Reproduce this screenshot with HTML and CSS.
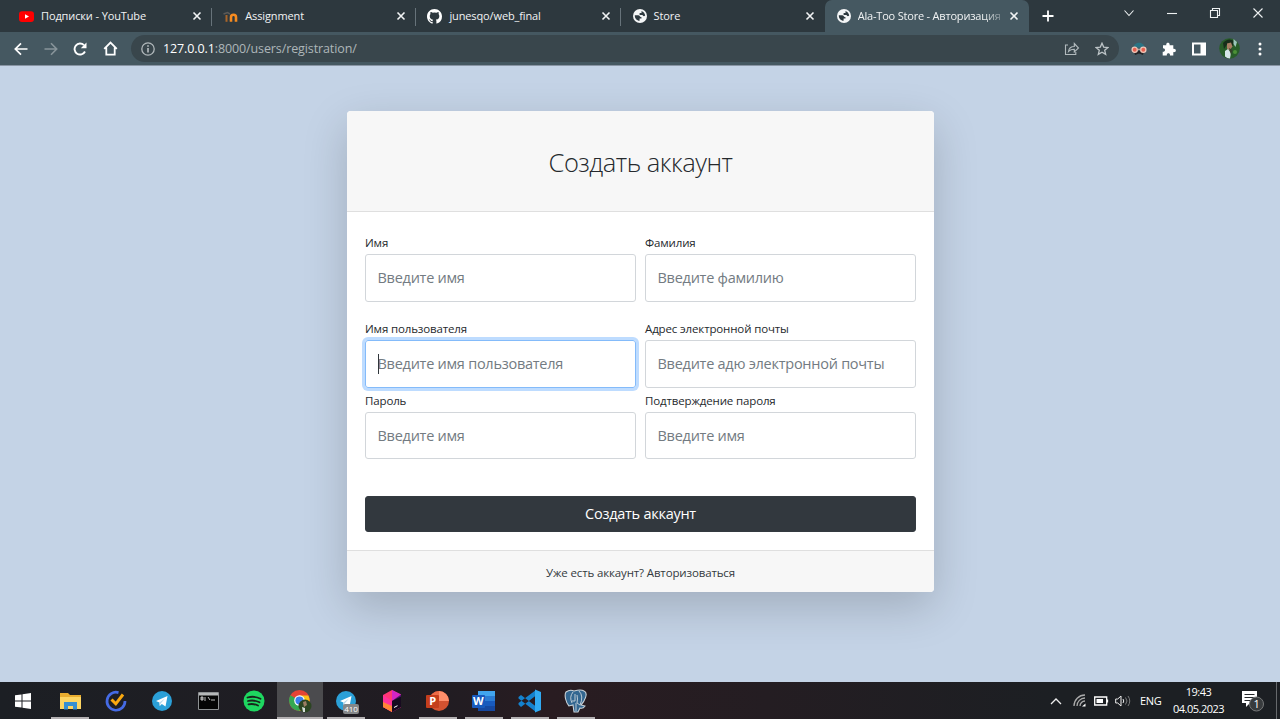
FILE: index.html
```html
<!DOCTYPE html>
<html lang="ru">
<head>
<meta charset="utf-8">
<title>Ala-Too Store - Авторизация</title>
<link rel="stylesheet" href="styles.css">
</head>
<body>
<svg class="defs" width="0" height="0">
  <symbol id="x" viewBox="0 0 10 10"><path d="M1.5 1.5l7 7M8.5 1.5l-7 7" stroke="#f1f3f4" stroke-width="1.6"/></symbol>
  <symbol id="globe" viewBox="0 0 14 14"><circle cx="7" cy="7" r="7" fill="#f4f6f7"/><path d="M1.800 6.200h3.400c1.700 0 1.600 2 3.300 2v1.300H6.600v2.300C3.800 11.600 1.600 9.300 1.800 6.200zM8.500 1.900c2.100.7 3.500 2.500 3.700 4.700-1 1-2.400.7-2.700-.5H6.600V3.900h1.900z" fill="#2e3a40"/></symbol>
  <symbol id="plane" viewBox="0 0 20 20"><circle cx="10" cy="10" r="10" fill="#2ba0d8"/><path d="M4 10l11.500-5-2 10.500-3.700-2.600-2 2-.4-3.500z" fill="#fff"/><path d="M7.400 11.400l5.600-4-4.300 5-.9 2.500z" fill="#b8d9eb"/></symbol>
</svg>
<div class="screen">
  <header class="tabs">
    <div class="tab sep">
      <svg class="fav" viewBox="0 0 15 15"><rect y="2.200" width="15" height="10.800" rx="3" fill="#f00"/><path d="M6 5.200v4.600l4-2.300z" fill="#fff"/></svg>
      <span class="title">Подписки - YouTube</span><svg class="close"><use href="#x"/></svg>
    </div>
    <div class="tab sep">
      <svg class="fav" viewBox="0 0 15 15"><path d="M.5 5l4-1.500 2.500 1.500" fill="none" stroke="#5b5a58" stroke-width="1.500"/><path d="M3.500 6v6.800" stroke="#a8652a" stroke-width="2"/><path d="M8 12.800V8.200c0-3.200 5-3.200 5 0v4.600" fill="none" stroke="#f58b20" stroke-width="2.600"/></svg>
      <span class="title">Assignment</span><svg class="close"><use href="#x"/></svg>
    </div>
    <div class="tab sep">
      <svg class="fav" viewBox="0 0 16 16"><path fill="#fff" d="M8 0C3.580 0 0 3.580 0 8c0 3.540 2.290 6.530 5.470 7.590.4.070.55-.17.55-.38v-1.490c-2.010.37-2.530-.49-2.690-.94-.09-.23-.48-.94-.82-1.130-.28-.15-.68-.52-.01-.53.63-.01 1.080.58 1.230.82.72 1.210 1.870.87 2.330.66.07-.52.28-.87.51-1.070-1.780-.2-3.640-.89-3.640-3.950 0-.87.31-1.590.82-2.150-.08-.2-.36-1.020.08-2.120 0 0 .67-.21 2.200.82a7.500 7.500 0 0 1 4 0c1.530-1.040 2.200-.82 2.200-.82.44 1.100.16 1.920.08 2.120.51.56.82 1.270.82 2.150 0 3.070-1.870 3.750-3.650 3.950.29.25.54.73.54 1.480v2.190c0 .21.150.46.550.38A8 8 0 0 0 16 8c0-4.420-3.580-8-8-8z"/></svg>
      <span class="title">junesqo/web_final</span><svg class="close"><use href="#x"/></svg>
    </div>
    <div class="tab">
      <svg class="fav globe"><use href="#globe"/></svg>
      <span class="title">Store</span><svg class="close"><use href="#x"/></svg>
    </div>
    <div class="tab active">
      <svg class="fav globe"><use href="#globe"/></svg>
      <span class="title">Ala-Too Store - Авторизация</span><svg class="close"><use href="#x"/></svg>
    </div>
    <svg class="plus" viewBox="0 0 12 12"><path d="M6 .5v11M.5 6h11" stroke="#fff" stroke-width="1.800"/></svg>
    <div class="window-controls">
      <svg width="12" height="12" viewBox="0 0 12 12"><path d="M1.500 3.500L6 8.500l4.500-5"/></svg>
      <svg width="12" height="12" viewBox="0 0 12 12"><path d="M1 6.500h10"/></svg>
      <svg width="12" height="12" viewBox="0 0 12 12"><path d="M1.500 3.500h7v7h-7zM3.500 3.500v-2h7v7h-2"/></svg>
      <svg width="12" height="12" viewBox="0 0 12 12"><path d="M1.500 1.500l9 9M10.500 1.500l-9 9"/></svg>
    </div>
  </header>

  <nav class="toolbar">
    <div class="nav-icons">
      <svg width="14" height="14" viewBox="0 0 14 14"><path d="M13.500 7H1.500M7 1.300L1.300 7 7 12.700" fill="none" stroke="#fff" stroke-width="1.700"/></svg>
      <svg width="14" height="14" viewBox="0 0 14 14"><path d="M.5 7h12M7 1.300L12.700 7 7 12.700" fill="none" stroke="#88949a" stroke-width="1.600"/></svg>
      <svg width="14" height="14" viewBox="0 0 14 14"><path d="M12 9.500A5.500 5.500 0 1 1 11 3.200" fill="none" stroke="#fff" stroke-width="1.900"/><path d="M13.500.5v5.700H7.800z" fill="#fff"/></svg>
      <svg width="15" height="15" viewBox="0 0 15 15"><path d="M1.200 7.800l6.300-6.300 6.300 6.300M3.300 6.500v7.200h8.400V6.500" fill="none" stroke="#fff" stroke-width="1.800"/></svg>
    </div>
    <div class="address">
      <svg width="14" height="14" viewBox="0 0 14 14"><circle cx="7" cy="7" r="6.200" fill="none" stroke="#b1b8bb" stroke-width="1.300"/><path d="M7 6v4.500M7 3.300v1.500" stroke="#c2c8ca" stroke-width="1.500"/></svg>
      <span class="url"><b>127.0.0.1</b>:8000/users/registration/</span>
      <svg class="share" width="16" height="14" viewBox="0 0 16 14"><path d="M4 3H1.500v9.500h10.300V10M4.500 9.500c.5-3.500 2.500-5 5.800-5V1.500L14.500 6l-4.200 4V7.200c-2.500 0-4.300.6-5.800 2.300z" fill="none" stroke="#b2babd" stroke-width="1.100"/></svg>
      <svg width="14" height="14" viewBox="0 0 14 14"><path d="M7 1.200l1.700 3.900 4.200.4-3.200 2.800 1 4.100L7 10.200l-3.700 2.200 1-4.100L1.100 5.500l4.200-.4z" fill="none" stroke="#bdc4c7" stroke-width="1.300"/></svg>
    </div>
    <svg class="ext" width="16" height="14" viewBox="0 0 16 14"><path d="M2.500 5.500C3-.8 13-.8 13.500 5.500z" fill="#2a7484"/><path d="M3 9h10l-1 4-4-1.500L4 13z" fill="#242326"/><circle cx="3.700" cy="7.800" r="2.600" fill="#e8604f" stroke="#efc7b8" stroke-width="1.300"/><circle cx="12.300" cy="7.800" r="2.600" fill="#e8604f" stroke="#efc7b8" stroke-width="1.300"/><path d="M6 7.300h4" stroke="#d8b5a8"/></svg>
    <svg class="puzzle" width="14" height="14" viewBox="0 0 14 14"><path d="M1 3.200h3.300C3.600-.1 8.200-.1 7.600 3.200h3.700v3.500c3.400-.6 3.400 4 0 3.400v3.400H8c.3-3-3.500-3-3.200 0H.7v-3.700c3 .2 3-3.700.3-3.500z" fill="#fff"/></svg>
    <svg class="panel" width="14" height="14" viewBox="0 0 14 14"><path d="M0 .5h14v13H0zM2 2.500v9h6.500v-9z" fill="#fff" fill-rule="evenodd"/></svg>
    <svg class="avatar" width="21" height="21" viewBox="0 0 21 21"><circle cx="10.500" cy="10.500" r="10.300" fill="#285d29"/><path d="M4 5q5-6 11-2l-1 5-5-3-4 6z" fill="#172d1b"/><path d="M14.500 1l3.500 3-1.500 5-2-3z" fill="#9cc6bc"/><path d="M8 5.500l4-1 1.500 4-3 4-2.500-2z" fill="#a87d63"/><path d="M6 13l3-2 3 4-1 5.500q-3 0-5-2z" fill="#d6e6e8"/><path d="M10 10l3.500 2-1.500 5z" fill="#37402a"/><circle cx="16" cy="14" r="2" fill="#4c9137"/></svg>
    <svg width="4" height="14" viewBox="0 0 4 14" fill="#fff"><circle cx="2" cy="2" r="1.500"/><circle cx="2" cy="7" r="1.500"/><circle cx="2" cy="12" r="1.500"/></svg>
  </nav>

  <main class="page">
    <form class="card">
      <div class="card-head"><h1>Создать аккаунт</h1></div>
      <div class="card-body">
        <div class="row first">
          <div class="group"><label>Имя</label><div class="input"><span>Введите имя</span></div></div>
          <div class="group"><label>Фамилия</label><div class="input"><span>Введите фамилию</span></div></div>
        </div>
        <div class="row">
          <div class="group"><label>Имя пользователя</label><div class="input focus"><i class="caret"></i><span>Введите имя пользователя</span></div></div>
          <div class="group"><label>Адрес электронной почты</label><div class="input"><span>Введите адю электронной почты</span></div></div>
        </div>
        <div class="row">
          <div class="group"><label>Пароль</label><div class="input"><span>Введите имя</span></div></div>
          <div class="group"><label>Подтверждение пароля</label><div class="input"><span>Введите имя</span></div></div>
        </div>
        <button type="button" class="submit">Создать аккаунт</button>
      </div>
      <div class="card-foot"><span>Уже есть аккаунт? Авторизоваться</span></div>
    </form>
  </main>

  <footer class="taskbar">
    <div class="apps">
      <div class="app start"><svg width="16" height="16" viewBox="0 0 16 16" fill="#fff"><path d="M0 2.300l6.500-.9v6.100H0zM7.500 1.200L16 0v7.500H7.500zM0 8.500h6.500v6.100L0 13.700zM7.500 8.500H16V16l-8.500-1.200z"/></svg></div>
      <div class="app open"><svg width="21" height="18" viewBox="0 0 21 18"><path d="M0 1h8l2 2h11v14H0z" fill="#e9ad2f"/><path d="M0 5h21v12H0z" fill="#fdd562"/><path d="M4 17.500V10h13v7.500h-4V14H8v3.500z" fill="#368fd2"/></svg></div>
      <div class="app"><svg width="22" height="22" viewBox="0 0 22 22"><path d="M13.500 2.600A9 9 0 1 0 20 11" fill="none" stroke="#456be5" stroke-width="2.700"/><path d="M6.500 9.500l4.300 4.300L18 4.500" fill="none" stroke="#f9a80f" stroke-width="3"/></svg></div>
      <div class="app"><svg width="20" height="20"><use href="#plane"/></svg></div>
      <div class="app"><svg width="21" height="18" viewBox="0 0 21 18"><path d="M.5.500h20v17H.5z" fill="#050505" stroke="#8e9193"/><path d="M1 1h19v2.500H1z" fill="#b6b8b9"/><path d="M3 5h2v3H3zM7 5v4M10 5l2 3M13 8h4" fill="#888" stroke="#bbb"/></svg></div>
      <div class="app"><svg width="22" height="22" viewBox="0 0 22 22"><circle cx="11" cy="11" r="10.500" fill="#1ed760"/><path d="M4.500 7.500q7-2 13 1.300M5 11q6-1.500 11.500 1.300M5.500 14.300q5-1 9.500 1.200" fill="none" stroke="#18251c" stroke-width="1.800" stroke-linecap="round"/></svg></div>
      <div class="app open current"><svg width="24" height="24" viewBox="0 0 24 24"><circle cx="11.500" cy="11.500" r="10.500" fill="#e54335"/><path d="M2.400 6.300A10.500 10.500 0 0 0 11.500 22l4.200-8z" fill="#35a853"/><path d="M11.500 6.500h8.800A10.500 10.500 0 0 1 11.500 22l4.300-8z" fill="#fbc116"/><circle cx="11.500" cy="11.500" r="5.300" fill="#fff"/><circle cx="11.500" cy="11.500" r="4.100" fill="#3b7ded"/><circle cx="17" cy="17" r="6.500" fill="#2c4522"/><path d="M15 13l3-1 1 4-3 2z" fill="#9b7d63"/><path d="M14 18l3 1v4h-2z" fill="#d5ded9"/></svg></div>
      <div class="app open"><div class="badged"><svg width="20" height="20"><use href="#plane"/></svg><span class="count">410</span></div></div>
      <div class="app"><svg width="20" height="22" viewBox="0 0 20 22"><path d="M10 0l9 4.500v12.700L10 22l-9-5V5z" fill="#ff3674"/><path d="M10 0l9 4.500-9 6.500z" fill="#d325c5"/><path d="M1 5l9 6v11l-9-5z" fill="#ff319a"/><path d="M1 12l9 4v6l-9-5z" fill="#ff8735"/><path d="M10 11l9-6.500V17l-9 5z" fill="#4e1273"/><path d="M10 11l9-4.500V17l-9 5z" fill="#170b20"/><path d="M12 17.500l3.500-1.800" stroke="#fff"/></svg></div>
      <div class="app open"><svg width="24" height="22" viewBox="0 0 24 22"><circle cx="13" cy="11" r="10" fill="#d35230"/><path d="M13 1a10 10 0 0 1 10 10H13z" fill="#ff8f6b"/><path d="M3 11a10 10 0 0 1 10-10v10z" fill="#ed6c47"/><rect y="5" width="13" height="13" rx="1" fill="#c43e1c"/><text x="3.200" y="15.300" class="office">P</text></svg></div>
      <div class="app open"><svg width="24" height="22" viewBox="0 0 24 22"><path d="M6 1h17v5H6z" fill="#41a5ee"/><path d="M6 6h17v5H6z" fill="#2b7cd3"/><path d="M6 11h17v5H6z" fill="#185abd"/><path d="M6 16h17v5H6z" fill="#1648a0"/><rect y="5" width="13" height="13" rx="1" fill="#185abd"/><text x="1" y="15.300" class="office">W</text></svg></div>
      <div class="app open"><svg width="24" height="24" viewBox="0 0 24 24"><path d="M.5 8l2.500-2L18 17.500V23L.5 9.500zM.5 15.500L3 18 18 6.500V1L.5 14z" fill="#1482cf"/><path d="M17 .5l6 2.500v18l-6 2.500z" fill="#31aaf2"/></svg></div>
      <div class="app open"><svg width="24" height="24" viewBox="0 0 24 24"><path d="M2 3q4-3 8-1 7-2 10 0c5 2 0 11-3 14l4 1q-2 3-5 2l-2 4h-4l-1-7-4 1C2 14 0 6 2 3z" fill="#336791" stroke="#c9d2d8" stroke-width="1.100"/><path d="M9 3q-4 5-1 11M8 12h3V5M15 2q5 5 1 14l-3-2q1-4 0-8M12 14v8" fill="none" stroke="#bccad4" stroke-width="1"/></svg></div>
    </div>
    <div class="tray">
      <svg class="chevron" width="12" height="12" viewBox="0 0 12 12"><path d="M1 9l5-5 5 5" fill="none" stroke="#eee" stroke-width="1.300"/></svg>
      <svg class="wifi" width="13" height="13" viewBox="0 0 13 13"><path d="M1 12A11 11 0 0 1 12 1M4 12A8 8 0 0 1 12 4M7 12a5 5 0 0 1 5-5" fill="none" stroke="#aaa" stroke-width="1.300"/><path d="M9 12.500l3.500-3v3z" fill="#fff"/></svg>
      <svg class="battery" width="15" height="10" viewBox="0 0 15 10"><path d="M.7 1h12v8H.7zM13.500 3.500v3" fill="none" stroke="#fff" stroke-width="1.300"/><path d="M2.500 3H9v4H2.500z" fill="#fff"/></svg>
      <svg class="sound" width="16" height="12" viewBox="0 0 16 12"><path d="M.7 4h2L6 1v10L2.700 8h-2zM8 4q1.500 2 0 4" fill="none" stroke="#eee"/><path d="M10.500 2.500q3 3.500 0 7M13 1q3.500 5 0 10" fill="none" stroke="#7c7d7e"/></svg>
      <span class="lang">ENG</span>
      <div class="clock"><span class="time">19:43</span><span class="date">04.05.2023</span></div>
      <svg class="notice" width="24" height="22" viewBox="0 0 24 22"><path d="M1 1h15v12H9l-4 4v-4H1z" fill="#fff"/><path d="M3.500 4.500h10M3.500 7.500h10M3.500 10.500h6" stroke="#25282b"/><circle cx="15.500" cy="14" r="7" fill="#383b3d" stroke="#767879"/><text x="12.500" y="18" class="notice-number">1</text></svg>
    </div>
  </footer>
</div>
</body>
</html>
```
FILE: styles.css
```css
* { box-sizing: border-box; }
body { margin: 0; font-family: "Open Sans", "Noto Sans", sans-serif; }
svg { flex: none; display: block; }
.defs { display: none; }
.screen { width: 1280px; height: 719px; display: flex; flex-direction: column; overflow: hidden; }

.tabs { height: 32px; flex: none; display: flex; background: #2d383e; padding-left: 8px; color: #f1f3f4; font-size: 11px; }
.tab { width: 204.2px; height: 32px; padding: 0 10px 0 11px; display: flex; align-items: center; }
.sep { background: linear-gradient(#67737a, #67737a) right 8px / 1px 18px no-repeat; }
.active { background: #455861; border-radius: 7px 7px 0 0; }
.fav { width: 15px; height: 15px; margin-right: 7px; }
.globe { width: 14px; height: 14px; margin-left: 1px; }
.title { flex: 1; white-space: nowrap; line-height: 18px; letter-spacing: -.12px; }
.active .title { letter-spacing: -.2px; -webkit-mask-image: linear-gradient(90deg, #000 125px, rgba(0,0,0,.2) 146px); }
.close { width: 10px; height: 10px; margin-left: 11px; }
.active .close { margin-left: 5px; }
.plus { width: 12px; height: 12px; margin: 10px 0 0 13px; }
.window-controls { margin: 7px 16px 0 auto; display: flex; gap: 31px; }
.window-controls path { fill: none; stroke: #eef1f2; stroke-width: 1.1; }

.toolbar { height: 34px; flex: none; display: flex; align-items: center; background: #455861; border-bottom: 1px solid #8995a4; padding: 0 18px 0 14px; }
.nav-icons { display: flex; gap: 15.6px; width: 117px; align-items: center; }
.address { width: 988px; height: 27px; border-radius: 14px; display: flex; align-items: center; padding: 0 10px; background: #39464c; }
.url { margin-left: 8px; color: #aeb6b9; font-size: 12.5px; letter-spacing: -.11px; line-height: 18px; }
.url b { color: #fff; font-weight: 400; }
.share { margin-left: auto; margin-right: 15px; }
.ext { margin-left: 12px; }
.puzzle { margin-left: 15px; }
.panel { margin-left: 16px; }
.avatar { margin: 0 18px 0 13px; }

.page { height: 616px; flex: none; background: #c4d3e6; display: flex; justify-content: center; padding-top: 45px; }
.card { width: 587px; height: 481px; margin-left: 1px; background: #fff; border-radius: 4px; box-shadow: 0 15px 45px rgba(0,0,0,.18); overflow: hidden; display: flex; flex-direction: column; }
.card-head { height: 101px; flex: none; background: #f7f7f7; border-bottom: 1px solid #dfdfdf; display: flex; align-items: center; justify-content: center; padding-top: 2px; }
h1 { margin: 0; font-size: 25.5px; line-height: 36px; font-weight: 300; letter-spacing: -.5px; color: #25292d; }
.card-body { height: 338px; flex: none; padding: 22px 18px 0; color: #25292d; }
.row { display: grid; grid-template-columns: 271px 271px; gap: 9px; height: 71.5px; }
.first { height: 86px; }
.group { display: flex; flex-direction: column; }
label { height: 20px; line-height: 18px; font-size: 11.5px; letter-spacing: -.14px; white-space: nowrap; }
.input { height: 47.5px; border: 1px solid #d2d6da; border-radius: 3px; display: flex; align-items: center; padding-left: 11.5px; color: #737b82; font-size: 14.5px; letter-spacing: -.26px; white-space: nowrap; position: relative; }
.focus { border-color: #84bbfa; box-shadow: 0 0 0 3px #bedcff; }
.caret { position: absolute; left: 12px; top: 13px; width: 1px; height: 20px; background: #30363b; }
.submit { display: block; width: 551px; height: 36px; margin: 33px 0 0; padding: 0; border: 1px solid #343a40; border-radius: 3px; background: #32383e; color: #fff; font: 14.5px/22px "Open Sans", "Noto Sans", sans-serif; letter-spacing: -.26px; }
.card-foot { flex: 1; background: #f7f7f7; border-top: 1px solid #dfdfdf; display: flex; align-items: center; justify-content: center; font-size: 11.5px; letter-spacing: -.14px; color: #343a40; padding-top: 2px; }

.taskbar { height: 37px; flex: none; background: linear-gradient(90deg, #1c1f24, #211c22 35%, #291c21 43%, #241d22 60%, #1c1f23 82%); display: flex; justify-content: space-between; }
.apps { display: flex; }
.app { width: 46px; height: 37px; display: flex; align-items: center; justify-content: center; padding-top: 2px; border-bottom: 2px solid transparent; }
.start { width: 47px; padding-right: 2px; }
.open { background: linear-gradient(#b4b1b3, #b4b1b3) center bottom / 38px 2px no-repeat; background-origin: border-box; }
.current { background: #4b4b4e; border-bottom-color: #b4b1b3; }
.badged { position: relative; }
.count { position: absolute; left: 7px; top: 13px; width: 16px; height: 10px; border-radius: 2px; background: #858789; color: #fff; font-size: 8px; line-height: 10px; text-align: center; }
.office { fill: #fff; font: 700 11px "Open Sans", sans-serif; }
.tray { display: flex; align-items: center; color: #fff; padding-right: 3px; border-right: 1px solid #66696c; margin-right: 3px; }
.wifi { margin-left: 11px; }
.battery { margin-left: 8px; }
.sound { margin-left: 6px; }
.lang { margin-left: 9px; font-size: 11px; width: 23px; letter-spacing: -.3px; }
.clock { width: 51px; margin-left: 10px; display: flex; flex-direction: column; align-items: center; font-size: 11px; line-height: 17px; letter-spacing: -.5px; margin-top: -2px; }
.notice { margin-left: 17px; margin-right: 8px; }
.notice-number { fill: #fff; font: 11px "Open Sans", sans-serif; }
```
